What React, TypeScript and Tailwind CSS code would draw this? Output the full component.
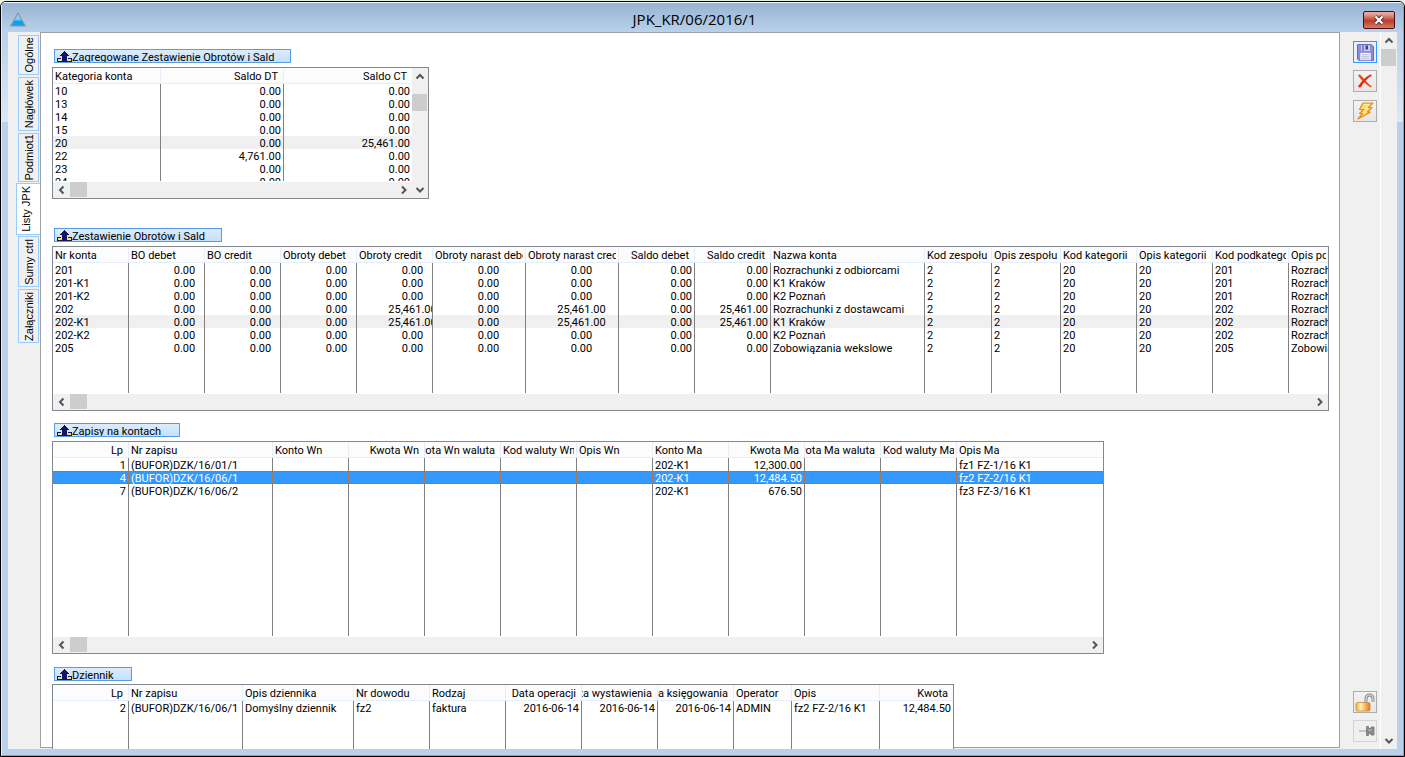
import React from "react";

type Align = "left" | "right" | "mid";

interface Column {
  label: string;
  width: string;
  align?: Align;
}

interface Row {
  cells: string[];
  state?: "shaded" | "selected";
}

const W76 = "w-[76px]";

const categoryColumns: Column[] = [
  { label: "Kategoria konta", width: "w-[108px]" },
  { label: "Saldo DT", width: "w-[123px]", align: "right" },
  { label: "Saldo CT", width: "w-auto", align: "right" },
];

const categoryRows: Row[] = [
  { cells: ["10", "0.00", "0.00"] },
  { cells: ["13", "0.00", "0.00"] },
  { cells: ["14", "0.00", "0.00"] },
  { cells: ["15", "0.00", "0.00"] },
  { cells: ["20", "0.00", "25,461.00"], state: "shaded" },
  { cells: ["22", "4,761.00", "0.00"] },
  { cells: ["23", "0.00", "0.00"] },
  { cells: ["24", "0.00", "0.00"] },
];

const balanceColumns: Column[] = [
  { label: "Nr konta", width: W76 },
  { label: "BO debet", width: W76, align: "mid" },
  { label: "BO credit", width: W76, align: "mid" },
  { label: "Obroty debet", width: W76, align: "mid" },
  { label: "Obroty credit", width: W76, align: "mid" },
  { label: "Obroty narast debet", width: "w-[93px]", align: "mid" },
  { label: "Obroty narast credit", width: "w-[93px]", align: "mid" },
  { label: "Saldo debet", width: W76, align: "right" },
  { label: "Saldo credit", width: W76, align: "right" },
  { label: "Nazwa konta", width: "w-[154px]" },
  { label: "Kod zespołu", width: "w-[67px]" },
  { label: "Opis zespołu", width: "w-[69px]" },
  { label: "Kod kategorii", width: W76 },
  { label: "Opis kategorii", width: W76 },
  { label: "Kod podkategorii", width: W76 },
  { label: "Opis podkategorii", width: "w-auto" },
];

const Z = "0.00";
const B = "25,461.00";

function balance(no: string, values: string[], name: string, sub: string, subName: string): string[] {
  return [no, ...values, name, "2", "2", "20", "20", sub, subName];
}

const zeros = [Z, Z, Z, Z, Z, Z, Z, Z];
const supplier = [Z, Z, Z, B, Z, B, Z, B];

const balanceRows: Row[] = [
  { cells: balance("201", zeros, "Rozrachunki z odbiorcami", "201", "Rozrachunki") },
  { cells: balance("201-K1", zeros, "K1 Kraków", "201", "Rozrachunki") },
  { cells: balance("201-K2", zeros, "K2 Poznań", "201", "Rozrachunki") },
  { cells: balance("202", supplier, "Rozrachunki z dostawcami", "202", "Rozrachunki") },
  { cells: balance("202-K1", supplier, "K1 Kraków", "202", "Rozrachunki"), state: "shaded" },
  { cells: balance("202-K2", zeros, "K2 Poznań", "202", "Rozrachunki") },
  { cells: balance("205", zeros, "Zobowiązania wekslowe", "205", "Zobowiązania") },
];

const entryColumns: Column[] = [
  { label: "Lp", width: W76, align: "right" },
  { label: "Nr zapisu", width: "w-[144px]" },
  { label: "Konto Wn", width: W76 },
  { label: "Kwota Wn", width: W76, align: "right" },
  { label: "Kwota Wn waluta", width: W76, align: "right" },
  { label: "Kod waluty Wn", width: W76 },
  { label: "Opis Wn", width: W76 },
  { label: "Konto Ma", width: W76 },
  { label: "Kwota Ma", width: W76, align: "right" },
  { label: "Kwota Ma waluta", width: W76, align: "right" },
  { label: "Kod waluty Ma", width: W76 },
  { label: "Opis Ma", width: "w-auto" },
];

const entryRows: Row[] = [
  { cells: ["1", "(BUFOR)DZK/16/01/1", "", "", "", "", "", "202-K1", "12,300.00", "", "", "fz1 FZ-1/16 K1"] },
  {
    cells: ["4", "(BUFOR)DZK/16/06/1", "", "", "", "", "", "202-K1", "12,484.50", "", "", "fz2 FZ-2/16 K1"],
    state: "selected",
  },
  { cells: ["7", "(BUFOR)DZK/16/06/2", "", "", "", "", "", "202-K1", "676.50", "", "", "fz3 FZ-3/16 K1"] },
];

const journalColumns: Column[] = [
  { label: "Lp", width: W76, align: "right" },
  { label: "Nr zapisu", width: "w-[114px]" },
  { label: "Opis dziennika", width: "w-[111px]" },
  { label: "Nr dowodu", width: W76 },
  { label: "Rodzaj", width: W76 },
  { label: "Data operacji", width: W76, align: "right" },
  { label: "Data wystawienia", width: W76, align: "right" },
  { label: "Data księgowania", width: W76, align: "right" },
  { label: "Operator", width: "w-[58px]" },
  { label: "Opis", width: "w-[88px]" },
  { label: "Kwota", width: "w-auto", align: "right" },
];

const journalRows: Row[] = [
  {
    cells: [
      "2",
      "(BUFOR)DZK/16/06/1",
      "Domyślny dziennik",
      "fz2",
      "faktura",
      "2016-06-14",
      "2016-06-14",
      "2016-06-14",
      "ADMIN",
      "fz2 FZ-2/16 K1",
      "12,484.50",
    ],
  },
];

const tabs = [
  { label: "Ogólne", height: "h-[40px]" },
  { label: "Nagłówek", height: "h-[54px]" },
  { label: "Podmiot1", height: "h-[49px]" },
  { label: "Listy JPK", height: "h-[52px]", active: true },
  { label: "Sumy ctrl", height: "h-[51px]" },
  { label: "Załączniki", height: "h-[54px]" },
];

function Chevron({ dir }: { dir: "up" | "down" | "left" | "right" }) {
  const d = {
    up: "M1.5 6.5 L5 3 L8.5 6.5",
    down: "M1.5 3 L5 6.5 L8.5 3",
    left: "M6.5 1.5 L3 5 L6.5 8.5",
    right: "M3 1.5 L6.5 5 L3 8.5",
  }[dir];
  return (
    <svg viewBox="0 0 10 10" className="size-[10px]" aria-hidden="true">
      <path d={d} fill="none" stroke="#555" strokeWidth="2" />
    </svg>
  );
}

function HScroll() {
  return (
    <div className="flex h-4 shrink-0 bg-[#f0f0f0]">
      <button aria-label="Przewiń w lewo" className="flex w-[17px] items-center justify-center">
        <Chevron dir="left" />
      </button>
      <div className="h-[15px] w-[17px] bg-[#cdcdcd]" />
      <div className="flex-1" />
      <button aria-label="Przewiń w prawo" className="flex w-[17px] items-center justify-center">
        <Chevron dir="right" />
      </button>
    </div>
  );
}

function VScroll({ offset }: { offset?: boolean }) {
  return (
    <div className="flex w-4 shrink-0 flex-col bg-[#f0f0f0]">
      <button aria-label="Przewiń w górę" className="flex h-[17px] items-center justify-center">
        <Chevron dir="up" />
      </button>
      {offset && <div className="h-[9px]" />}
      <div className="h-[17px] w-[15px] bg-[#cdcdcd]" />
      <div className="flex-1" />
      <button aria-label="Przewiń w dół" className="flex h-[17px] items-center justify-center">
        <Chevron dir="down" />
      </button>
    </div>
  );
}

function DataTable({ columns, rows, label }: { columns: Column[]; rows: Row[]; label: string }) {
  return (
    <table aria-label={label} className="h-full w-full table-fixed border-separate border-spacing-0">
      <colgroup>
        {columns.map((c) => (
          <col key={c.label} className={c.width} />
        ))}
      </colgroup>
      <thead>
        <tr className="h-4">
          {columns.map((c) => (
            <th
              key={c.label}
              scope="col"
              className="h-4 border-r border-b border-[#e5effa] bg-[#fcfcfc] p-0 font-normal last:border-r-0"
            >
              <div
                className={
                  c.align === "right"
                    ? "flex h-[15px] justify-end overflow-hidden pr-[5px] leading-[18px] whitespace-nowrap"
                    : "mr-0.5 ml-0.5 h-[15px] overflow-hidden text-left leading-[18px] whitespace-nowrap"
                }
              >
                {c.label}
              </div>
            </th>
          ))}
        </tr>
      </thead>
      <tbody>
        {rows.map((r) => (
          <tr
            key={r.cells[0]}
            className={
              r.state === "selected"
                ? "h-[13px] bg-[#3399ff] text-white"
                : r.state === "shaded"
                  ? "h-[13px] bg-[#f0f0f0]"
                  : "h-[13px]"
            }
          >
            {r.cells.map((text, i) => {
              const align = columns[i].align ?? "left";
              return (
                <td
                  key={columns[i].label}
                  className={
                    r.state === "selected"
                      ? "h-[13px] border-r border-[#a87850] bg-[repeating-linear-gradient(90deg,#cc6600_0px,#cc6600_1px,#3399ff_1px,#3399ff_2px),repeating-linear-gradient(90deg,#cc6600_0px,#cc6600_1px,#3399ff_1px,#3399ff_2px)] [background-size:100%_1px] [background-position:0_0,0_100%] bg-no-repeat p-0 last:border-[#cc6600] last:border-dotted"
                      : "h-[13px] border-r border-[#808080] p-0 last:border-r-0"
                  }
                >
                  <div
                    className={
                      align === "right"
                        ? "flex h-[13px] justify-end overflow-hidden pr-0.5 leading-4 whitespace-nowrap"
                        : "h-[13px] overflow-hidden pl-0.5 leading-4 whitespace-nowrap"
                    }
                  >
                    {align === "mid" ? <div className="-ml-0.5 w-[111px] text-center">{text}</div> : text}
                  </div>
                </td>
              );
            })}
          </tr>
        ))}
        <tr aria-hidden="true">
          {columns.map((c) => (
            <td key={c.label} className="border-r border-[#808080] p-0 last:border-r-0" />
          ))}
        </tr>
      </tbody>
    </table>
  );
}

function ExportIcon() {
  return (
    <svg viewBox="0 0 15 11" className="mt-px h-[11px] w-[15px] shrink-0" aria-hidden="true" shapeRendering="crispEdges">
      <path d="M0 7h4v1h7V7h4v4H0z" fill="#14145f" />
      <path d="M1 8h4v2H1zM10 8h4v2h-4z" fill="#ffdf6b" />
      <path d="M4 6h7v2H4z" fill="#dcebfb" />
      <path d="M7 0h1v1h1v1h1v1h1v1h1v1H3V4h1V3h1V2h1V1h1z" fill="#14145f" />
      <rect x="5" y="5" width="5" height="4" fill="#14145f" />
    </svg>
  );
}

function Caption({ text, width }: { text: string; width: string }) {
  return (
    <button
      className={`ml-0.5 flex h-[14px] items-start overflow-hidden border border-[#569de5] bg-linear-to-b from-[#dcecfc] to-[#c4e0fb] pl-0.5 text-left leading-4 whitespace-nowrap ${width}`}
    >
      <ExportIcon />
      <span>{text}</span>
    </button>
  );
}

function FloppyIcon() {
  return (
    <svg viewBox="0 0 17 17" className="size-[17px]" aria-hidden="true">
      <path d="M.5 .5H14l2.500 2V16.500H2L.5 15z" fill="#8c8fdc" stroke="#6669bd" />
      <rect x="4" y="1" width="9" height="6" fill="#c9cbe8" />
      <rect x="5" y="1" width="2" height="6" fill="#7f83c9" />
      <rect x="8.500" y="1.500" width="2.500" height="4" fill="#3d4380" />
      <rect x="3" y="8.500" width="11" height="8" fill="#f7f8ff" stroke="#7a7ecf" strokeWidth=".6" />
      <path d="M4.500 10.800h8M4.500 12.800h8M4.500 14.800h8" stroke="#a5a8c8" strokeWidth=".9" />
    </svg>
  );
}

function CrossIcon() {
  return (
    <svg viewBox="0 0 16 16" className="size-4" aria-hidden="true">
      <path d="M1 2.500Q2.500.5 4 2.500Q7 5.500 9 8Q11.500 11.200 14.800 13.200L14 14.500Q10.500 12.800 7.500 9.800Q3.500 6.500 1 2.500z" fill="#f04a22" />
      <path d="M14.800 2.400Q10.500 5 7.500 8.800Q5.500 11.500 4.300 13.800Q2.500 15.300 1 13.500Q3 10.500 6 7Q9.500 3.300 13.800 1.200z" fill="#e82a0c" />
    </svg>
  );
}

function BoltIcon() {
  return (
    <svg viewBox="0 0 17 18" className="h-[18px] w-[17px]" aria-hidden="true">
      <path
        d="M6 1H16L11.500 5.500H15L10.500 10H13.500L1 17L5.500 11.500H2.500L6.500 7.500H2.500z"
        fill="#ffd964"
        stroke="#f08a12"
        strokeWidth="1.200"
        strokeLinejoin="round"
      />
      <path d="M7 2.500h5L8 6.500h3L7 10.500h2" fill="none" stroke="#fff1b0" strokeWidth="1" />
    </svg>
  );
}

function LockIcon() {
  return (
    <svg viewBox="0 0 20 19" className="h-[19px] w-5" aria-hidden="true">
      <defs>
        <linearGradient id="lockBody" x1="0" x2="1">
          <stop offset="0" stopColor="#f5b040" />
          <stop offset=".35" stopColor="#fff0b4" />
          <stop offset=".7" stopColor="#f9ae45" />
          <stop offset="1" stopColor="#e8762a" />
        </linearGradient>
      </defs>
      <path d="M11 9.500V6Q11 2 14.500 2T18 6V9" fill="none" stroke="#8c8c8c" strokeWidth="3" />
      <path d="M11 9.500V6Q11 2 14.500 2T18 6V9" fill="none" stroke="#d8d8d8" strokeWidth="1.200" />
      <rect x="1" y="9.500" width="14" height="8.500" rx="1.500" fill="url(#lockBody)" stroke="#c08a4c" strokeWidth=".8" />
    </svg>
  );
}

function PinIcon() {
  return (
    <svg viewBox="0 0 16 12" className="h-3 w-4" aria-hidden="true">
      <path d="M0 6h8" stroke="#b0b0b0" strokeWidth="1.300" />
      <path d="M7.500 1.500H9.500V3.500H12V2H15V10H12V8.500H9.500V10.500H7.500z" fill="#8a8a8a" stroke="#747474" strokeWidth=".8" />
      <path d="M9.500 5h3" stroke="#cfcfcf" />
    </svg>
  );
}

const toolClass = "flex h-[22px] w-6 items-center justify-center border border-[#adadad] bg-linear-to-b from-[#f3f3f3] to-[#e6e6e6]";

function TitleBar() {
  return (
    <header className="flex h-[29px] shrink-0 items-center justify-between bg-linear-to-b from-[#98b4d3] to-[#b9d1ea] px-2">
      <svg viewBox="0 0 16 15" className="mt-1 h-[15px] w-4" aria-hidden="true">
        <defs>
          <linearGradient id="tri" x1="0" y1="0" x2="0" y2="1">
            <stop offset="0" stopColor="#9fd3f2" />
            <stop offset=".55" stopColor="#7cc8f2" />
            <stop offset=".6" stopColor="#0f9af0" />
            <stop offset="1" stopColor="#0aa5f5" />
          </linearGradient>
        </defs>
        <path d="M8 1L15.300 14H.7z" fill="url(#tri)" stroke="#8b97a3" strokeWidth="1.200" strokeLinejoin="round" />
      </svg>
      <h1 className="pt-0.5 font-['Open_Sans',sans-serif] text-[15px] leading-5 text-black">JPK_KR/06/2016/1</h1>
      <button
        aria-label="Zamknij"
        className="mt-[5px] flex h-[18px] w-8 items-center justify-center rounded-[2px] border border-[#4a1018] bg-linear-to-b from-[#e6a79f] from-10% via-[#bd3a28] via-55% to-[#d67a68]"
      >
        <svg viewBox="0 0 12 10" className="h-[10px] w-3" aria-hidden="true">
          <path d="M2.500 1.500L9.500 8.500M9.500 1.500L2.500 8.500" stroke="#553038" strokeWidth="4" />
          <path d="M2.500 1.500L9.500 8.500M9.500 1.500L2.500 8.500" stroke="#fff" strokeWidth="2.200" />
        </svg>
      </button>
    </header>
  );
}

function FrameSide() {
  return (
    <div className="w-[6px] shrink-0">
      <div className="h-[90px] bg-linear-to-b from-[#b9d1ea] to-[#dde8f4]" />
    </div>
  );
}

export default function App() {
  return (
    <div className="flex h-screen flex-col overflow-hidden bg-[#e9f0ea] pt-px font-[Roboto,'Noto_Sans',sans-serif] text-[11px] text-black">
      <div className="flex min-h-0 flex-1 flex-col overflow-hidden rounded-t-md border border-black">
        <div className="flex min-h-0 flex-1 flex-col border border-t-[#f4f8fc] border-r-[#38c3d8] border-b-[#38c3d8] border-l-[#e3edf7]">
          <TitleBar />
          <div className="flex min-h-0 flex-1 bg-[#b9d1ea] pb-[6px]">
            <FrameSide />
            <div className="flex min-h-0 min-w-0 flex-1 overflow-hidden bg-[#f0f0f0]">
              <nav aria-label="Zakładki" className="flex w-8 shrink-0 flex-col items-end gap-0.5 pt-[3px] font-['Liberation_Sans',Arial,sans-serif]">
                {tabs.map((t) => (
                  <button
                    key={t.label}
                    className={
                      t.active
                        ? `z-10 -my-px flex w-6 shrink-0 items-center justify-center border border-r-0 border-[#99ccff] bg-white pr-1 ${t.height}`
                        : `mr-px flex w-[21px] shrink-0 items-center justify-center border border-[#99ccff] bg-[#f0f0f0] pl-0.5 ${t.height}`
                    }
                  >
                    <span className="rotate-180 whitespace-nowrap [writing-mode:vertical-rl]">{t.label}</span>
                  </button>
                ))}
              </nav>

              <main className="mb-px flex min-w-0 flex-1 flex-col border border-[#a0a0a0] bg-white pt-4 pr-[10px] pl-[11px]">
                <section className="mb-[29px] shrink-0">
                  <Caption text="Zagregowane Zestawienie Obrotów i Sald" width="w-[237px]" />
                  <div className="mt-1 flex h-[132px] w-[377px] border border-[#828790]">
                    <div className="flex min-w-0 flex-1 flex-col">
                      <div className="h-[113px] overflow-hidden">
                        <DataTable label="Zagregowane Zestawienie" columns={categoryColumns} rows={categoryRows} />
                      </div>
                      <div className="flex-1" />
                      <HScroll />
                    </div>
                    <VScroll offset />
                  </div>
                </section>

                <section className="mb-3 shrink-0">
                  <Caption text="Zestawienie Obrotów i Sald" width="w-[168px]" />
                  <div className="mt-1 flex h-[165px] w-full flex-col border border-[#828790]">
                    <div className="h-[146px] overflow-hidden">
                      <DataTable label="Zestawienie Obrotów i Sald" columns={balanceColumns} rows={balanceRows} />
                    </div>
                    <div className="flex-1" />
                    <HScroll />
                  </div>
                </section>

                <section className="mb-[13px] shrink-0">
                  <Caption text="Zapisy na kontach" width="w-[126px]" />
                  <div className="mt-1 flex h-[213px] w-[1052px] max-w-full flex-col border border-[#828790]">
                    <div className="h-[194px] overflow-hidden">
                      <DataTable label="Zapisy na kontach" columns={entryColumns} rows={entryRows} />
                    </div>
                    <div className="flex-1" />
                    <HScroll />
                  </div>
                </section>

                <section className="shrink-0">
                  <Caption text="Dziennik" width="w-[78px]" />
                  <div className="mt-[3px] h-[120px] w-[902px] max-w-full overflow-hidden border border-[#828790] bg-white">
                    <DataTable label="Dziennik" columns={journalColumns} rows={journalRows} />
                  </div>
                </section>
              </main>

              <aside aria-label="Narzędzia" className="flex w-10 shrink-0 flex-col pt-[9px] pb-[7px] pl-[13px]">
                <button aria-label="Zapisz" className="flex h-[22px] w-6 items-center justify-center border border-[#3399ff] bg-[#e8f1fb]">
                  <FloppyIcon />
                </button>
                <button aria-label="Usuń" className={`mt-[7px] ${toolClass}`}>
                  <CrossIcon />
                </button>
                <button aria-label="Wykonaj" className={`mt-2 ${toolClass}`}>
                  <BoltIcon />
                </button>
                <div className="flex-1" />
                <button aria-label="Odblokuj" className={toolClass}>
                  <LockIcon />
                </button>
                <button aria-label="Przypnij" className="mt-[7px] flex h-[22px] w-6 items-center justify-center border border-[#d5d5d5] bg-[#efefef] pl-1">
                  <PinIcon />
                </button>
              </aside>
              <div className="flex shrink-0 border-l border-white">
                <VScroll />
              </div>
            </div>
            <FrameSide />
          </div>
        </div>
      </div>
    </div>
  );
}
